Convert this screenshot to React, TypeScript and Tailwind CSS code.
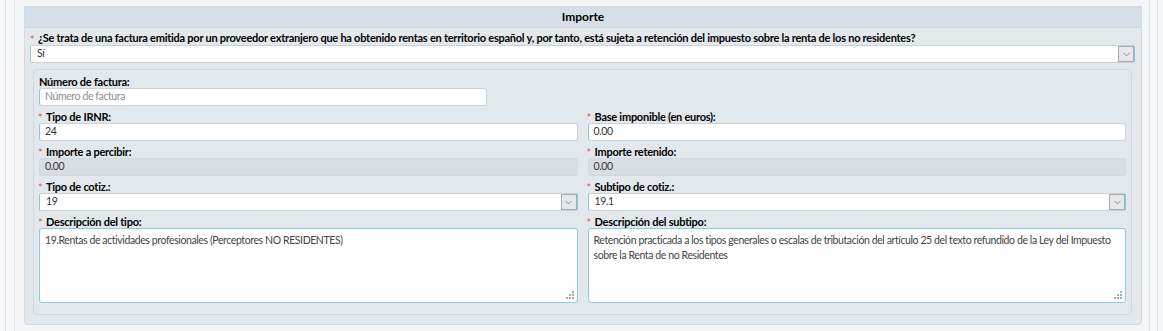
import React from 'react'
import { ChevronDown } from 'lucide-react'

const font = { fontFamily: 'Lato, "Liberation Sans", Arial, sans-serif' }

// regular text is narrower than Lato 11px in the original, so shrink a bit
const reg = 'text-[10.5px] tracking-[-0.4px]'

function Star({ w = 'w-[8px]' }: { w?: string }) {
  return (
    <span className={`${w} h-[13px] flex items-center -ml-[1px]`}>
      <span className="text-[#e0575a] text-[11px] leading-none font-normal translate-y-[1px]">*</span>
    </span>
  )
}

function Label({ text, required = true }: { text: string; required?: boolean }) {
  return (
    <div className="flex items-center h-[13px] leading-[13px] text-[11px] font-bold tracking-[-0.25px] text-black">
      {required && <Star />}
      <span>{text}</span>
    </div>
  )
}

function TextInput({ value, placeholder }: { value?: string; placeholder?: string }) {
  return (
    <div
      className={`h-[18px] bg-white border border-[#c9d1d9] border-l-[#86c8e6] rounded-[3px] flex items-center pl-[5px] ${reg} ${
        value ? 'text-[#333]' : 'text-[#8a8f95]'
      }`}
    >
      {value || placeholder}
    </div>
  )
}

function Disabled({ value }: { value: string }) {
  return (
    <div className={`h-[18px] bg-[#d9dee3] border border-[#d2d8de] rounded-[3px] flex items-center pl-[5px] ${reg} text-[#333]`}>
      {value}
    </div>
  )
}

function Select({ value }: { value: string }) {
  return (
    <div className={`h-[18px] bg-white border border-[#c9d1d9] border-l-[#86c8e6] border-r-[#86c8e6] rounded-[2px] flex items-center justify-between pl-[6px] ${reg} text-[#333]`}>
      <span>{value}</span>
      <div className="h-[16px] w-[16px] bg-[#e6e7e8] border border-[#a6abb0] flex items-center justify-center">
        <ChevronDown size={11} strokeWidth={1.3} className="text-[#555]" />
      </div>
    </div>
  )
}

function TextArea({ value }: { value: string }) {
  return (
    <div className={`relative h-[75px] bg-white border border-[#8fcbe6] rounded-[3px] pl-[5px] pr-[1px] pt-[4px] ${reg} leading-[15px] text-[#444]`}>
      {value}
      {/* grip */}
      <div className="absolute right-[3px] bottom-[3px] grid grid-cols-3 gap-[1px]">
        <span className="w-[2px] h-[2px]" />
        <span className="w-[2px] h-[2px]" />
        <span className="w-[2px] h-[2px] bg-[#aaa]" />
        <span className="w-[2px] h-[2px]" />
        <span className="w-[2px] h-[2px] bg-[#aaa]" />
        <span className="w-[2px] h-[2px] bg-[#aaa]" />
        <span className="w-[2px] h-[2px] bg-[#aaa]" />
        <span className="w-[2px] h-[2px] bg-[#aaa]" />
        <span className="w-[2px] h-[2px] bg-[#aaa]" />
      </div>
    </div>
  )
}

export default function App() {
  return (
    <div className="w-[1163px] h-[331px] bg-[#f6f7f9] overflow-hidden" style={font}>
      <div className="ml-[5px] mr-[5px] h-full border-x border-[#e1e5ea] bg-[#f7f8fa]">
        <div className="ml-[8px] mr-[7px] h-full border-x border-[#dde5ee] bg-[#f3f5f7] pt-[6px] pl-[9px] pr-[7px]">
          {/* PANEL */}
          <div className="border border-[#d2dae3] rounded-b-[4px] bg-[#e3e8ed]">
            <div className="h-[21px] bg-[#d6dfe8] border-b border-[#cdd6df] flex items-center justify-center text-[12px] font-bold text-black">
              Importe
            </div>

            <div className="pl-[5px] pr-[6px] pt-[4px] pb-[9px]">
              <div className="flex items-center h-[13px] text-[11px] font-bold tracking-[-0.25px] text-black pl-[1px] whitespace-nowrap">
                <Star w="w-[8px]" />
                <span>
                  ¿Se trata de una factura emitida por un proveedor extranjero que ha obtenido rentas en territorio español y, por tanto, está sujeta a retención del impuesto sobre la renta de los no residentes?
                </span>
              </div>
              <Select value="Sí" />

              {/* INNER */}
              <div className="mt-[6px] mx-[3px] border border-[#d0d8e0] rounded-[4px] bg-[#e3e8ed] px-[5px] pt-[5px] pb-[11px]">
                <div className="w-[448px]">
                  <Label text="Número de factura:" required={false} />
                  <TextInput placeholder="Número de factura" />
                </div>

                <div className="grid grid-cols-2 gap-x-[10px] gap-y-[4px] mt-[4px]">
                  <div>
                    <Label text="Tipo de IRNR:" />
                    <TextInput value="24" />
                  </div>
                  <div>
                    <Label text="Base imponible (en euros):" />
                    <TextInput value="0.00" />
                  </div>
                  <div>
                    <Label text="Importe a percibir:" />
                    <Disabled value="0.00" />
                  </div>
                  <div>
                    <Label text="Importe retenido:" />
                    <Disabled value="0.00" />
                  </div>
                  <div>
                    <Label text="Tipo de cotiz.:" />
                    <Select value="19" />
                  </div>
                  <div>
                    <Label text="Subtipo de cotiz.:" />
                    <Select value="19.1" />
                  </div>
                  <div>
                    <Label text="Descripción del tipo:" />
                    <TextArea value="19.Rentas de actividades profesionales (Perceptores NO RESIDENTES)" />
                  </div>
                  <div>
                    <Label text="Descripción del subtipo:" />
                    <TextArea value="Retención practicada a los tipos generales o escalas de tributación del artículo 25 del texto refundido de la Ley del Impuesto sobre la Renta de no Residentes" />
                  </div>
                </div>
              </div>
            </div>
          </div>
        </div>
      </div>
    </div>
  )
}
